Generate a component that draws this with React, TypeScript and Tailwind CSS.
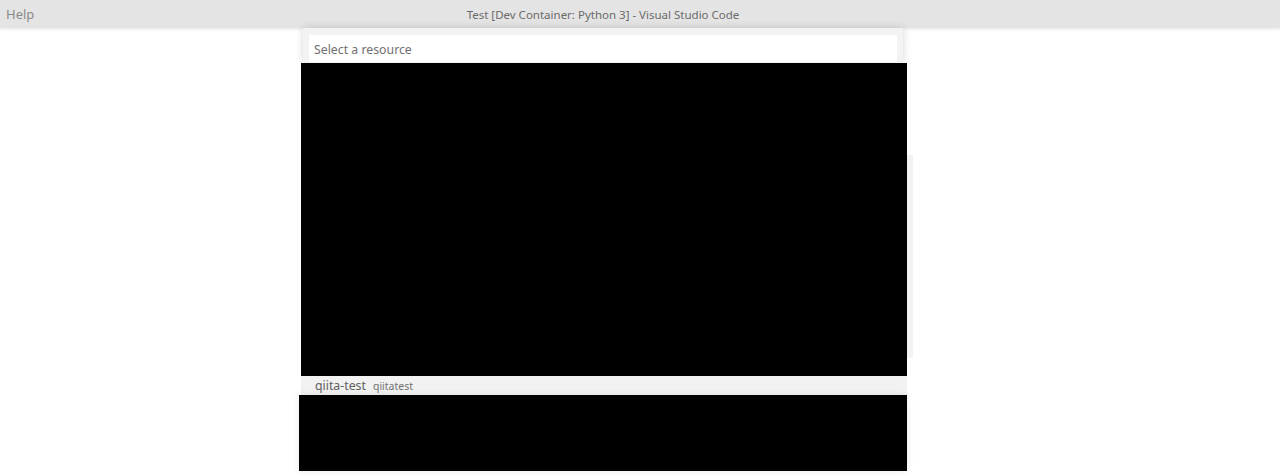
export default function App() {
  return (
    <div
      className="relative h-[476px] w-full overflow-hidden bg-white"
      style={{ fontFamily: '"Noto Sans", "Open Sans", sans-serif' }}
    >
      {/* Title bar */}
      <div className="flex h-[28px] items-center bg-[#e4e4e4] pt-[2px] shadow-[0_1px_3px_rgba(0,0,0,0.12)]">
        <div className="w-[40px] pl-[6px] text-[13px] text-[#8a8a8a]">Help</div>
        <div className="flex flex-1 justify-center pr-[114px] text-[11.5px] text-[#6a6a6a]">
          Test [Dev Container: Python 3] - Visual Studio Code
        </div>
      </div>

      {/* faint panel behind the quick pick */}
      <div className="absolute left-[907px] top-[155px] h-[203px] w-[6px] bg-[#f3f3f3]" />

      {/* Quick pick */}
      <div className="absolute left-[299px] top-[28px] flex w-[608px] flex-col">
        <div className="ml-[4px] mr-[4px] bg-[#f3f3f3] px-[6px] pb-[1px] pt-[7px] shadow-[0_0_8px_rgba(0,0,0,0.16)]">
          <div className="flex h-[27px] items-center bg-white pl-[5px] pt-[4px] text-[12.3px] text-[#6f6f6f]">
            Select a resource
          </div>
        </div>
        <div className="ml-[2px] h-[313px] bg-black" />
        <div className="ml-[2px] flex h-[19px] items-center gap-[7px] bg-[#f2f2f2] pl-[14px] pt-[2px]">
          <span className="text-[12.3px] text-[#616161]">qiita-test</span>
          <span className="text-[10.5px] text-[#717171]">qiitatest</span>
        </div>
        <div className="h-[76px] bg-black shadow-[0_0_8px_rgba(0,0,0,0.08)]" />
      </div>
    </div>
  );
}
